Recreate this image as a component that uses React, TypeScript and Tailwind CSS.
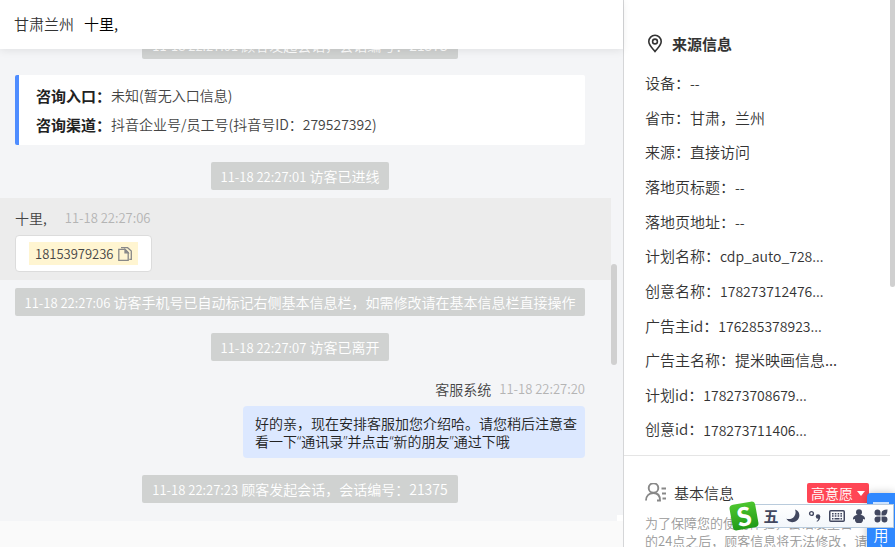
import type { ReactNode } from "react";

type Field = { label: string; value: string; numeric?: boolean };

const sourceFields: Field[] = [
  { label: "设备", value: "--", numeric: true },
  { label: "省市", value: "甘肃，兰州" },
  { label: "来源", value: "直接访问" },
  { label: "落地页标题", value: "--", numeric: true },
  { label: "落地页地址", value: "--", numeric: true },
  { label: "计划名称", value: "cdp_auto_728...", numeric: true },
  { label: "创意名称", value: "178273712476...", numeric: true },
  { label: "广告主id", value: "176285378923...", numeric: true },
  { label: "广告主名称", value: "提米映画信息..." },
  { label: "计划id", value: "178273708679...", numeric: true },
  { label: "创意id", value: "178273711406...", numeric: true },
];

function Notice({ time, children }: { time: string; children: ReactNode }) {
  return (
    <div className="flex shrink-0 justify-center pr-[26px] pl-[15px]">
      <p className="h-7 rounded-xs bg-[#d0d2d1] px-2.5 text-sm leading-7 whitespace-nowrap text-white">
        <time className="text-[13px]">{time}</time> {children}
      </p>
    </div>
  );
}

function PinIcon() {
  return (
    <svg className="size-5" viewBox="0 0 20 20" fill="none" stroke="#333" strokeWidth="1.6" aria-hidden="true">
      <path d="M10 17.500C7.500 14.300 3.800 11.300 3.800 7.500a6.200 6.200 0 0 1 12.400 0C16.200 11.300 12.500 14.300 10 17.500Z" />
      <circle cx="10" cy="7.500" r="2.400" />
    </svg>
  );
}

function PersonIcon() {
  return (
    <svg className="h-5 w-[22px]" viewBox="0 0 22 20" fill="none" stroke="#888" strokeWidth="1.9" aria-hidden="true">
      <circle cx="8.500" cy="5" r="4.800" />
      <path d="M1 17.500c0-4.500 3-7.500 7.500-7.500 4.200 0 6.500 2.800 6.500 7.500h-3" />
      <path d="M16.500 5.500H21M17 10.500h4M17.500 15.500H21" />
    </svg>
  );
}

function CopyIcon() {
  return (
    <svg className="size-[14px]" viewBox="0 0 14 14" fill="none" stroke="#888" strokeWidth="1.3" aria-hidden="true">
      <path d="M.8 2.400h6.200L10.200 5.600V13.300H.8Z" />
      <path d="M7 2.400v3.400h3.200Z" fill="#888" />
      <path d="M3 .7h6.600L13.300 4v8.300h-2" />
    </svg>
  );
}

function Conversation() {
  return (
    <main className="flex min-w-0 flex-1 flex-col bg-[#fafafa]">
      <header className="z-10 flex h-[49px] shrink-0 items-center gap-[10px] bg-white px-[14px] text-[15px] shadow-[0_2px_8px_rgba(0,0,0,0.08)]">
        <span className="text-[#333]">甘肃兰州</span>
        <h1 className="text-black">十里,</h1>
      </header>

      <div className="relative flex min-h-0 flex-1 flex-col justify-end overflow-hidden bg-[#f4f5f7] pb-[18px]">
        <div className="mr-3 flex shrink-0 flex-col">
          <Notice time="11-18 22:27:01">顾客发起会话，会话编号：21375</Notice>

          <dl className="mt-4 mr-[26px] ml-[15px] rounded-xs border-l-4 border-[#4f8dff] bg-white px-[17px] py-[6px] text-[15px] leading-[29px] text-[#444]">
            <div className="flex">
              <dt className="font-bold text-[#222]">咨询入口：</dt>
              <dd className="text-sm leading-[29px]">未知(暂无入口信息)</dd>
            </div>
            <div className="flex">
              <dt className="font-bold text-[#222]">咨询渠道：</dt>
              <dd className="text-sm leading-[29px]">抖音企业号/员工号(抖音号ID：279527392)</dd>
            </div>
          </dl>

          <div className="mt-[17px] mb-2">
            <Notice time="11-18 22:27:01">访客已进线</Notice>
          </div>

          <section className="h-[82px] bg-[#ececec] px-[15px] pt-[11px]">
            <div className="flex gap-[18px] text-sm leading-[18px]">
              <span className="text-[#444]">十里,</span>
              <time className="text-[13px] leading-[18px] text-[#b4b4b4]">11-18 22:27:06</time>
            </div>
            <div className="mt-2 inline-flex rounded border border-[#dcdcdc] bg-white px-[13px] py-[6px]">
              <button className="flex h-[23px] items-center gap-1 bg-[#fff5d1] px-[6px] text-[13px] text-[#444]">
                18153979236
                <CopyIcon />
              </button>
            </div>
          </section>

          <div className="mt-2 mb-[17px]">
            <Notice time="11-18 22:27:06">访客手机号已自动标记右侧基本信息栏，如需修改请在基本信息栏直接操作</Notice>
          </div>
          <Notice time="11-18 22:27:07">访客已离开</Notice>

          <section className="mt-[19px] mr-[26px] mb-[17px] flex flex-col items-end text-sm leading-[18px]">
            <div className="flex gap-2">
              <span className="text-[#444]">客服系统</span>
              <time className="text-[13px] leading-[18px] text-[#b4b4b4]">11-18 22:27:20</time>
            </div>
            <p className="mt-2 w-[342px] rounded bg-[#dce8ff] pt-[9px] pr-2 pb-[7px] pl-3 font-['Open_Sans','Noto_Sans_CJK_SC',sans-serif] text-[#222]">
              好的亲，现在安排客服加您介绍哈。请您稍后注意查看一下“通讯录”并点击“新的朋友”通过下哦
            </p>
          </section>
          <Notice time="11-18 22:27:23">顾客发起会话，会话编号：21375</Notice>
        </div>

        <span className="absolute right-[6px] bottom-[156px] h-[101px] w-[6px] rounded-full bg-[#d0d0d0]" />
        <span className="absolute right-0 bottom-0 size-[6px] bg-white" />
      </div>
      <footer className="h-[26px] shrink-0" />
    </main>
  );
}

function Sidebar() {
  return (
    <aside className="relative flex w-[272px] shrink-0 flex-col overflow-hidden border-l border-[#d5d6d8] bg-white pr-[5px] text-[#333]">
      <section className="shrink-0 border-b border-[#e5e5e5] pt-[34px] pb-2 pl-[21px]">
        <h2 className="flex h-5 items-center gap-[7px] text-[15px] font-bold">
          <PinIcon />
          来源信息
        </h2>
        <dl className="mt-3 grid h-[381px] auto-rows-fr text-[15px]">
          {sourceFields.map(({ label, value, numeric }) => (
            <div key={label} className="flex items-center">
              <dt>{label}：</dt>
              <dd className={numeric ? "text-sm" : ""}>{value}</dd>
            </div>
          ))}
        </dl>
      </section>

      <section className="shrink-0 px-[21px] pt-[25px]">
        <div className="flex items-center gap-[7px]">
          <PersonIcon />
          <h2 className="flex-1 text-[15px] leading-6">基本信息</h2>
          <button className="flex h-5 items-center gap-1 rounded-xs bg-[#ff4655] px-1 text-sm text-white">
            高意愿
            <svg className="h-[5px] w-2" viewBox="0 0 8 5" fill="currentColor" aria-hidden="true">
              <path d="M0 0h8L4 5Z" />
            </svg>
          </button>
        </div>
        <p className="mt-[9px] text-[13px] leading-[18px] whitespace-nowrap text-[#999]">
          为了保障您的使用体验，会话发生日
          <br />
          的24点之后，顾客信息将无法修改，请
        </p>
      </section>

      <span className="absolute top-0 right-0 h-[287px] w-[5px] rounded-b-sm bg-[#d0d0d0]" />
    </aside>
  );
}

function UserTab() {
  return (
    <button className="absolute right-0 bottom-0 flex h-[54px] w-7 flex-col items-center overflow-hidden rounded-tl bg-[#2f88ff] pt-[9px] text-[15px] leading-[16px] text-white shadow-[0_0_8px_rgba(0,0,0,0.25)]">
      <svg className="h-[25px] w-4 shrink-0" viewBox="0 0 16 25" fill="none" stroke="currentColor" strokeWidth="1.5" aria-hidden="true">
        <path d="M0 1h16M2 6h12v14H2Z" />
      </svg>
      <span className="w-4 shrink-0">用户</span>
    </button>
  );
}

function InputMethodBar() {
  return (
    <div className="absolute right-px bottom-[19px] flex h-6 w-[149px] items-center border border-[#b9cbdc] bg-linear-to-b from-white to-[#f3f7fb] pl-[14px] text-[#424860]">
      <span className="absolute -left-[15px] flex size-[26px] -rotate-10 items-center justify-center rounded bg-linear-to-b from-[#4cc62f] to-[#1e9a17] font-['Lato',sans-serif] text-[26px] leading-none font-black text-white">
        S
      </span>
      <button className="w-[22px] shrink-0 text-[15px] leading-5 font-bold">五</button>
      <button className="flex w-[22px] shrink-0 justify-center" aria-label="夜间模式">
        <svg className="size-[14px]" viewBox="0 0 14 14" fill="currentColor">
          <path d="M9 .5C12 1.500 13.800 4 13.300 7.300 12.700 11 9.500 13.400 6 13.200 3.500 13 1.500 11.800.3 9.800 3.500 10.600 6.500 9.800 8.200 7.500 9.800 5.300 10 2.800 9 .5Z" />
        </svg>
      </button>
      <button className="flex w-[22px] shrink-0 justify-center" aria-label="中文标点">
        <svg className="size-[14px]" viewBox="0 0 14 14" fill="currentColor">
          <circle cx="3.500" cy="4.500" r="1.900" fill="none" stroke="currentColor" strokeWidth="1.400" />
          <circle cx="10" cy="7.500" r="2.200" />
          <path d="M12.200 7.500C12.400 10 11 12 9 12.800L8.500 12C9.800 11.300 10.500 10.300 10.300 8.500Z" />
        </svg>
      </button>
      <button className="flex w-[22px] shrink-0 justify-center" aria-label="软键盘">
        <svg className="h-3 w-4" viewBox="0 0 16 12" fill="none" stroke="currentColor" strokeWidth="1.500">
          <rect x=".75" y=".75" width="14.500" height="10.500" rx="1" />
          <path d="M3 3.700h10M3 6.100h10" strokeDasharray="1.600 1.200" />
          <path d="M3 8.700h1.500M5.500 8.700h5M11.500 8.700H13" />
        </svg>
      </button>
      <button className="flex w-[22px] shrink-0 justify-center" aria-label="账户">
        <svg className="size-[14px]" viewBox="0 0 14 14" fill="currentColor">
          <circle cx="7" cy="3.200" r="3" />
          <path d="M4.500 6h5C12 6.500 13.300 8.500 13 10.500L11 10c.3 2-.7 3.500-2 4H5C3.700 13.500 2.700 12 3 10L1 10.500C.7 8.500 2 6.500 4.500 6Z" />
        </svg>
      </button>
      <button className="flex w-[22px] shrink-0 justify-center" aria-label="工具箱">
        <svg className="size-[14px]" viewBox="0 0 14 14" fill="currentColor">
          <path d="M6.500 6.500H3.300A3 3 0 1 1 6.500 3.300ZM6.500 7.500v3.200A3 3 0 1 1 3.300 7.500ZM7.500 7.500h3.200A3 3 0 1 1 7.500 10.700Z" />
          <path d="M7.500 6.500V4C7.500 1.800 9.500.5 13.500.5 13.500 4.500 12.200 6.500 10 6.500Z" />
        </svg>
      </button>
    </div>
  );
}

export default function App() {
  return (
    <div className="relative flex h-screen overflow-hidden font-['Noto_Sans_CJK_SC',sans-serif] font-[350]">
      <Conversation />
      <Sidebar />
      <UserTab />
      <InputMethodBar />
    </div>
  );
}
